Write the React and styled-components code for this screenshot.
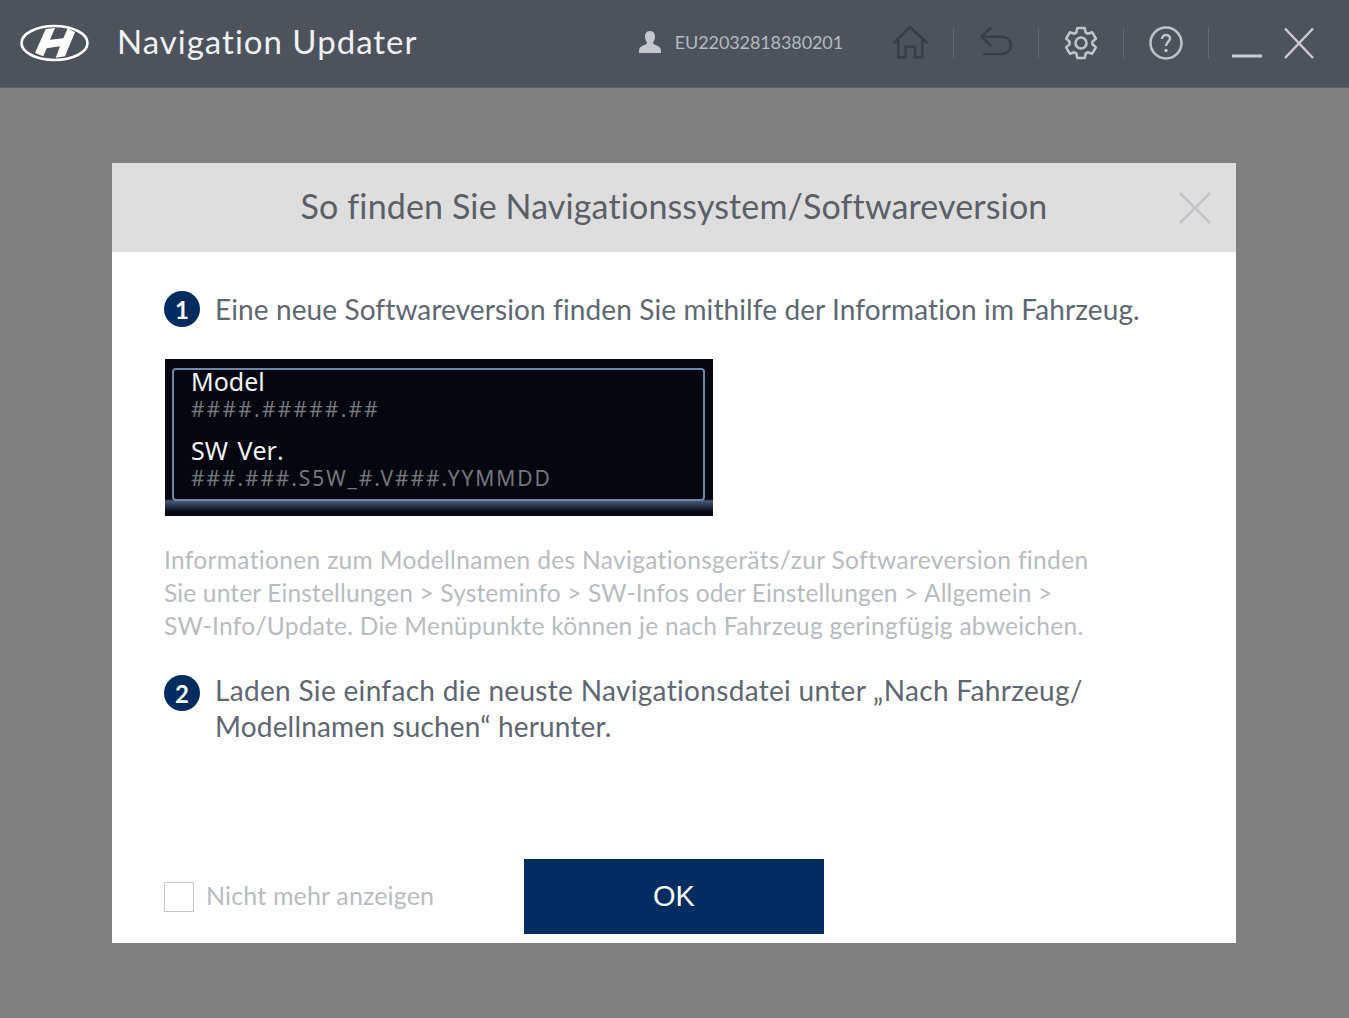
import styled, { createGlobalStyle } from "styled-components";

const Global = createGlobalStyle`
  html, body { margin: 0; padding: 0; }
  body {
    font-family: "Lato", "Liberation Sans", sans-serif;
    font-variant-ligatures: none;
    background: #808080;
  }
`;

const Page = styled.div`
  width: 1349px;
  height: 1018px;
  background: #808080;
  overflow: hidden;
`;

const TitleBar = styled.header`
  height: 88px;
  background: #4c535d;
  border-bottom: 1px solid #5d636b;
  box-sizing: border-box;
  display: flex;
  align-items: center;
  padding: 0 34px 1px 20px;
`;

const AppName = styled.h1`
  margin: 0 0 0 28px;
  padding-bottom: 5px;
  font-size: 33px;
  font-weight: 400;
  letter-spacing: 1px;
  color: #f0f1f2;
`;

const UserBox = styled.div`
  margin-left: auto;
  padding-bottom: 3px;
  display: flex;
  align-items: center;
  gap: 14px;
  color: #b4bac0;
  font-size: 18px;
  letter-spacing: -0.1px;
`;

const Tools = styled.div`
  margin-left: 50px;
  display: flex;
  align-items: center;
`;

const ToolSlot = styled.div`
  width: 36px;
  height: 36px;
  color: ${(p) => p.$color || "#bfc4c9"};
  svg { display: block; }
`;

const Sep = styled.span`
  width: 1px;
  height: 30px;
  margin: 0 24px;
  background: #646b74;
`;

const WinButtons = styled.div`
  display: flex;
  align-items: center;
  gap: 21px;
  margin-left: -1px;
  color: #c8ccd0;
`;

const Modal = styled.section`
  width: 1124px;
  height: 780px;
  margin: 75px 0 0 112px;
  background: #fff;
  display: flex;
  flex-direction: column;
`;

const ModalHead = styled.div`
  height: 89px;
  flex: none;
  background: #dedede;
  display: flex;
  align-items: center;
  justify-content: center;
  position: relative;
`;

const ModalTitle = styled.h2`
  margin: 0;
  padding-bottom: 4px;
  font-size: 34px;
  font-weight: 400;
  letter-spacing: 0.13px;
  color: #5a6068;
`;

const CloseIcon = styled.svg`
  position: absolute;
  right: 25px;
  top: 29px;
`;

const Body = styled.div`
  flex: 1;
  padding: 39px 52px 0;
`;

const Step = styled.div`
  display: flex;
  gap: 15px;
  align-items: flex-start;
  margin-top: ${(p) => p.$top || 0}px;
`;

const Badge = styled.span`
  flex: none;
  width: 36px;
  height: 36px;
  margin-top: ${(p) => p.$shift || 0}px;
  border-radius: 50%;
  background: #002c5f;
  color: #fff;
  font-size: 24px;
  font-weight: 700;
  display: flex;
  align-items: center;
  justify-content: center;
`;

const StepText = styled.p`
  margin: 0;
  font-size: 28px;
  line-height: 36px;
  color: #5e6772;
`;

// each wrapped line of copy gets its own tracking, the real font's widths differ per line
const Line = styled.span`
  display: block;
  letter-spacing: ${(p) => p.$track || 0}px;
`;

const Panel = styled.div`
  width: 548px;
  height: 157px;
  margin: 32px 0 0 1px;
  box-sizing: border-box;
  padding: 9px 8px 0 7px;
  background: linear-gradient(#04070f 140px, #46597a 142px, #04070f 153px);
  font-family: "Noto Sans", sans-serif;
`;

const PanelInner = styled.div`
  height: 133px;
  box-sizing: border-box;
  padding: 0 17px;
  background: #04070f;
  border: 2px solid #6c87a8;
  border-radius: 4px;
`;

const PanelLabel = styled.div`
  font-size: 25px;
  line-height: 22px;
  font-kerning: none;
  word-spacing: 3px;
  color: #f2f3f4;
  margin-top: ${(p) => p.$top || 0}px;
`;

const PanelValue = styled.div`
  margin-top: 3px;
  font-size: 21px;
  line-height: 28px;
  letter-spacing: ${(p) => p.$track}px;
  color: #74777b;
`;

const Note = styled.p`
  margin: 27px 0 0;
  font-size: 24.5px;
  line-height: 33px;
  color: #b7bcc2;
`;

const Footer = styled.div`
  flex: none;
  display: grid;
  grid-template-columns: 1fr 300px 1fr;
  align-items: center;
  padding: 0 52px 9px;
`;

const CheckRow = styled.label`
  display: flex;
  align-items: center;
  gap: 12px;
  font-size: 25px;
  letter-spacing: 0.15px;
  color: #b7bcc2;
`;

const CheckText = styled.span`
  margin-bottom: 4px;
`;

const CheckBox = styled.span`
  width: 30px;
  height: 30px;
  box-sizing: border-box;
  border: 1px solid #c4c7cb;
  background: #fff;
`;

const OkButton = styled.button`
  height: 75px;
  border: 0;
  background: #002c5f;
  color: #fff;
  font-family: "Liberation Sans", sans-serif;
  font-size: 29px;
`;

const Logo = () => (
  <svg width="69" height="38" viewBox="0 0 69 38" fill="none">
    <ellipse cx="34.5" cy="19" rx="33" ry="17" stroke="#fff" strokeWidth="2.600" />
    <path d="M25.700 5 L35 4 L30 15.700 L43.300 14.300 L47.700 4.300 L55 8.300 L45 32.300 L35.700 33.700 L40 22.300 L26.700 24.300 L23.300 32.300 L15 29 Z" fill="#fff" />
  </svg>
);

const User = () => (
  <svg width="22" height="22" viewBox="0 0 22 22" fill="#c3c8cd">
    <path d="M11 0C15 0 16 3 16 6C16 9 14.500 10.500 14 12C14 14 21 14 22 19V22H0V19C1 14 8 14 8 12C7.500 10.500 6 9 6 6C6 3 7 0 11 0Z" />
  </svg>
);

const Home = () => (
  <svg width="36" height="36" viewBox="0 0 36 36" fill="none" stroke="currentColor" strokeWidth="2.500">
    <path d="M0.300 18.300 L17 2.300 L34.700 18.300 M5.300 14 V32.300 H12.700 V21.700 H22 V32.300 H29.300 V14" />
  </svg>
);

const Back = () => (
  <svg width="36" height="36" viewBox="0 0 36 36" fill="none" stroke="currentColor" strokeWidth="2.500">
    <path d="M13 2.300 L3.700 11.700 L13 21 M3.700 11.700 H23 C29 11.700 33 15 33 20.300 C33 25.500 29 29 23 29 H5.300" />
  </svg>
);

// six lobed cog, outline computed once
const gearPath = Array.from({ length: 6 }, (_, i) => {
  const a = (i * Math.PI) / 3 - Math.PI / 2;
  const pt = (r, d) => `${(18 + r * Math.cos(a + d)).toFixed(2)} ${(18 + r * Math.sin(a + d)).toFixed(2)}`;
  return `L${pt(11.500, -0.42)} L${pt(15.500, -0.24)} L${pt(15.500, 0.24)} L${pt(11.500, 0.42)}`;
}).join(" ").replace("L", "M") + " Z";

const Gear = () => (
  <svg width="36" height="36" viewBox="0 0 36 36" fill="none" stroke="currentColor" strokeWidth="2.600" strokeLinejoin="round">
    <path d={gearPath} />
    <circle cx="18" cy="18" r="5.500" />
  </svg>
);

const Help = () => (
  <svg width="36" height="36" viewBox="0 0 36 36" fill="none" stroke="currentColor" strokeWidth="2.500">
    <circle cx="18" cy="18" r="15.500" />
    <path d="M14 14c0-2.500 1.800-4 4-4s4 1.500 4 3.500c0 3-3.800 3.500-4 7.500" />
    <circle cx="18" cy="25.500" r="1.700" fill="currentColor" stroke="none" />
  </svg>
);

const App = () => (
  <Page>
    <Global />
    <TitleBar>
      <Logo />
      <AppName>Navigation Updater</AppName>
      <UserBox>
        <User />
        EU22032818380201
      </UserBox>
      <Tools>
        <ToolSlot $color="#383e47"><Home /></ToolSlot>
        <Sep />
        <ToolSlot $color="#383e47"><Back /></ToolSlot>
        <Sep />
        <ToolSlot><Gear /></ToolSlot>
        <Sep />
        <ToolSlot><Help /></ToolSlot>
        <Sep />
      </Tools>
      <WinButtons>
        <svg width="30" height="34" viewBox="0 0 30 34">
          <rect y="28.500" width="30" height="3" fill="currentColor" />
        </svg>
        <svg width="32" height="32" viewBox="0 0 32 32" stroke="currentColor" strokeWidth="2.500">
          <path d="M2 1.500 L30 31 M30 1.500 L2 31" />
        </svg>
      </WinButtons>
    </TitleBar>
    <Modal>
      <ModalHead>
        <ModalTitle>So finden Sie Navigationssystem/Softwareversion</ModalTitle>
        <CloseIcon width="32" height="32" viewBox="0 0 32 32" stroke="#c0c5ca" strokeWidth="2.500">
          <path d="M1 1 L31 31 M31 1 L1 31" />
        </CloseIcon>
      </ModalHead>
      <Body>
        <Step>
          <Badge>1</Badge>
          <StepText>
            <Line $track={0.11}>Eine neue Softwareversion finden Sie mithilfe der Information im Fahrzeug.</Line>
          </StepText>
        </Step>
        <Panel>
          <PanelInner>
            <PanelLabel>Model</PanelLabel>
            <PanelValue $track={2.2}>####.#####.##</PanelValue>
            <PanelLabel $top={16}>SW Ver.</PanelLabel>
            <PanelValue $track={1.9}>###.###.S5W_#.V###.YYMMDD</PanelValue>
          </PanelInner>
        </Panel>
        <Note>
          <Line $track={0.34}>Informationen zum Modellnamen des Navigationsgeräts/zur Softwareversion finden</Line>
          <Line $track={0.15}>Sie unter Einstellungen &gt; Systeminfo &gt; SW-Infos oder Einstellungen &gt; Allgemein &gt;</Line>
          <Line $track={0.27}>SW-Info/Update. Die Menüpunkte können je nach Fahrzeug geringfügig abweichen.</Line>
        </Note>
        <Step $top={30}>
          <Badge $shift={3}>2</Badge>
          <StepText>
            <Line $track={0.32}>Laden Sie einfach die neuste Navigationsdatei unter „Nach Fahrzeug/</Line>
            <Line $track={0.18}>Modellnamen suchen“ herunter.</Line>
          </StepText>
        </Step>
      </Body>
      <Footer>
        <CheckRow>
          <CheckBox />
          <CheckText>Nicht mehr anzeigen</CheckText>
        </CheckRow>
        <OkButton>OK</OkButton>
      </Footer>
    </Modal>
  </Page>
);

export default App;
